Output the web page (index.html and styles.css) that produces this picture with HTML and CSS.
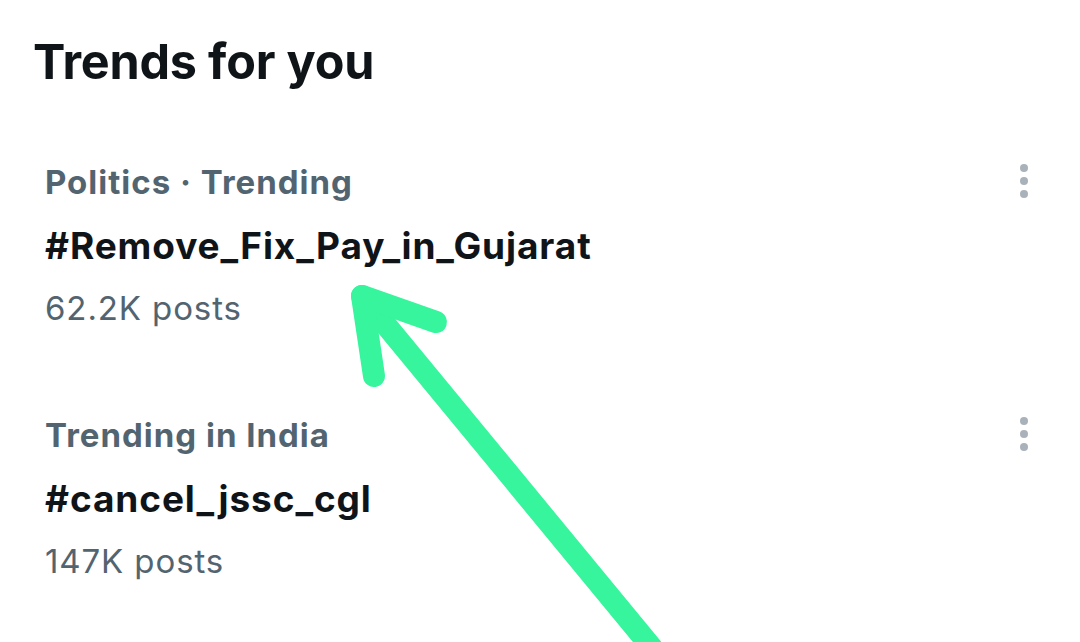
FILE: index.html
```html
<!DOCTYPE html>
<html>
<head>
<meta charset="utf-8">
<link rel="stylesheet" href="styles.css">
</head>
<body>
<main class="panel">
  <h1 class="title">Trends for you</h1>
  <section class="trend">
    <div class="trend-body">
      <div class="meta">Politics · Trending</div>
      <div class="tag">#Remove_Fix_Pay_in_Gujarat</div>
      <div class="count">62.2K posts</div>
    </div>
    <svg class="more" width="12" height="40" viewBox="0 0 12 40"><circle cx="6" cy="6" r="4"/><circle cx="6" cy="19" r="4"/><circle cx="6" cy="32" r="4"/></svg>
  </section>
  <section class="trend">
    <div class="trend-body">
      <div class="meta">Trending in India</div>
      <div class="tag">#cancel_jssc_cgl</div>
      <div class="count">147K posts</div>
    </div>
    <svg class="more" width="12" height="40" viewBox="0 0 12 40"><circle cx="6" cy="6" r="4"/><circle cx="6" cy="19" r="4"/><circle cx="6" cy="32" r="4"/></svg>
  </section>
</main>
<svg class="arrow" width="1080" height="642" viewBox="0 0 1080 642">
  <g fill="none" stroke="#36f59c" stroke-width="22" stroke-linecap="round" stroke-linejoin="round">
    <path d="M662 660 L362 296"/>
    <path d="M374 376 L362 296 L436 322"/>
  </g>
</svg>
</body>
</html>
```
FILE: styles.css
```css
html, body {
  margin: 0;
  padding: 0;
  background: #ffffff;
}
body {
  width: 1080px;
  height: 642px;
  overflow: hidden;
  position: relative;
  font-family: Inter, "Liberation Sans", sans-serif;
}
.panel {
  display: flex;
  flex-direction: column;
  padding: 32.4px 0 0 0;
}
.title {
  margin: 0 0 69.6px 33px;
  font-size: 48.5px;
  line-height: 60px;
  font-weight: 700;
  color: #0f1419;
  letter-spacing: -0.2px;
}
.trend {
  display: flex;
  justify-content: space-between;
  align-items: flex-start;
  padding: 0 50px 0 45px;
  height: 253px;
}
.trend-body {
  display: flex;
  flex-direction: column;
}
.meta {
  font-size: 33px;
  line-height: 40px;
  font-weight: 700;
  color: #536471;
  letter-spacing: 1px;
}
.tag {
  margin-top: 22.5px;
  font-size: 37px;
  line-height: 44px;
  font-weight: 700;
  color: #0f1419;
  letter-spacing: 0.9px;
}
.count {
  margin-top: 19.5px;
  font-size: 33px;
  line-height: 40px;
  font-weight: 400;
  color: #536471;
  letter-spacing: 0.9px;
}
.more {
  fill: #a9b2ba;
  margin-top: 0;
}
.arrow {
  position: absolute;
  left: 0;
  top: 0;
}
```
